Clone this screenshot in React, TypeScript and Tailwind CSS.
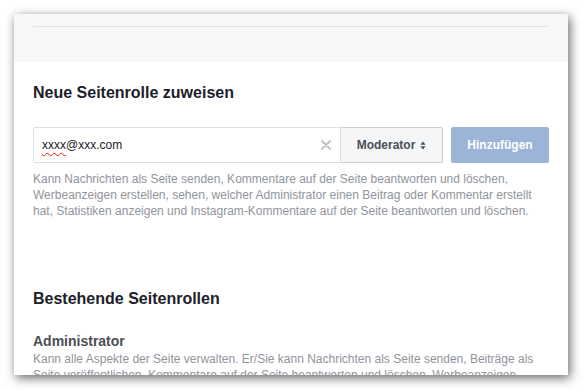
import React from 'react'

const font = { fontFamily: '"Liberation Sans", Arial, sans-serif' }

function ClearIcon() {
  return (
    <svg width="10" height="10" viewBox="0 0 10 10" fill="none">
      <path d="M1 1l8 8M9 1L1 9" stroke="#bec3c9" strokeWidth="1.8" strokeLinecap="round" />
    </svg>
  )
}

function SortIcon() {
  return (
    <svg width="6" height="9" viewBox="0 0 6 9">
      <path d="M3 0.5L5.6 3.7H0.4z" fill="#4b4f56" />
      <path d="M3 8.5L5.6 5.3H0.4z" fill="#4b4f56" />
    </svg>
  )
}

export default function App() {
  return (
    <div className="w-[583px] h-[390px] bg-white pt-[14px] pl-[14px]" style={font}>
      <div className="w-[554px] h-[361px] bg-white overflow-hidden shadow-[2px_3px_10px_rgba(0,0,0,0.6)]">
        {/* oberer grauer Bereich */}
        <div className="h-[48px] bg-[#f7f7f7] px-[19px] pt-[12px]">
          <div className="border-t border-[#e3e3e3]" />
        </div>

        <div className="px-[19px]">
          <h2 className="mt-[21px] text-[16px] leading-[20px] font-bold text-[#1d2129]">
            Neue Seitenrolle zuweisen
          </h2>

          {/* Eingabezeile */}
          <div className="mt-[24px] flex h-[36px] gap-[8px]">
            <div className="flex flex-1 min-w-0">
              <div className="flex flex-1 items-center border border-[#dddfe2] rounded-l-[2px] pl-[8px] pr-[9px]">
                <span className="flex-1 text-[12px] text-[#1d2129]">
                  <span className="underline decoration-wavy decoration-[#e02020] decoration-1 underline-offset-[3px]">xxxx</span>@xxx.com
                </span>
                <ClearIcon />
              </div>
              <button className="w-[102px] flex items-center justify-center gap-[5px] bg-[#f5f6f7] border border-l-0 border-[#ccd0d5] rounded-r-[2px] text-[12px] font-bold text-[#4b4f56]">
                Moderator
                <SortIcon />
              </button>
            </div>
            <button className="w-[98px] bg-[#9cb4d8] rounded-[2px] text-white text-[12px] font-bold">
              Hinzufügen
            </button>
          </div>

          <p className="mt-[8px] text-[12px] leading-[16px] text-[#90949c]">
            Kann Nachrichten als Seite senden, Kommentare auf der Seite beantworten und löschen,
            Werbeanzeigen erstellen, sehen, welcher Administrator einen Beitrag oder Kommentar erstellt
            hat, Statistiken anzeigen und Instagram-Kommentare auf der Seite beantworten und löschen.
          </p>

          <h2 className="mt-[70px] text-[16px] leading-[20px] font-bold text-[#1d2129]">
            Bestehende Seitenrollen
          </h2>

          <h3 className="mt-[23px] text-[14px] leading-[18px] font-bold text-[#4b4f56]">
            Administrator
          </h3>
          <p className="mt-[1px] text-[12px] leading-[16px] text-[#90949c]">
            Kann alle Aspekte der Seite verwalten. Er/Sie kann Nachrichten als Seite senden, Beiträge als
            Seite veröffentlichen, Kommentare auf der Seite beantworten und löschen, Werbeanzeigen
            erstellen und sehen, welcher Administrator einen Beitrag oder Kommentar erstellt hat.
          </p>
        </div>
      </div>
    </div>
  )
}
